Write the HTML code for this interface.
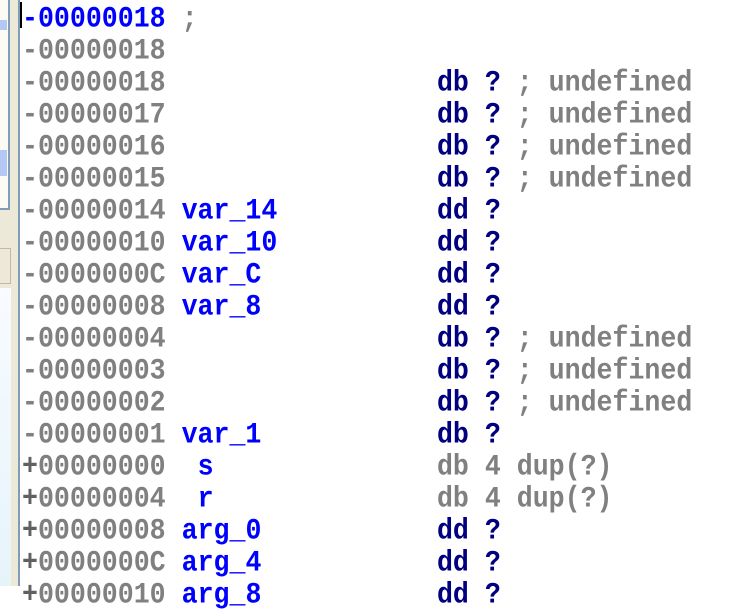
<!DOCTYPE html>
<html><head><meta charset="utf-8"><style>
html,body{margin:0;padding:0;width:754px;height:586px;overflow:hidden;background:#fff}
.l{position:absolute;left:22px;height:32px;line-height:32px;font-family:"Liberation Mono","DejaVu Sans Mono",monospace;font-weight:bold;font-size:26.6px;white-space:pre;color:#808080;transform:scaleY(1.1);transform-origin:0 50%}
.b{color:#0000ff}.n{color:#000080}.g{color:#808080}.d{color:#606060}
</style></head><body>
<div style="position:absolute;left:0;top:0;width:18px;height:586px;background:#ece9d8"></div>
<div style="position:absolute;left:0;top:0;width:8px;height:208px;background:#fbfbf4;border-right:2px solid #7f9db9;border-bottom:2px solid #7f9db9"></div>
<div style="position:absolute;left:0;top:20px;width:7px;height:10px;background:#b5c8f5"></div>
<div style="position:absolute;left:0;top:150px;width:7px;height:26px;background:#b5c8f5"></div>
<div style="position:absolute;left:0;top:248px;width:10px;height:34px;border:1px solid #bdb8a8;border-left:none"></div>
<div style="position:absolute;left:0;top:288px;width:11px;height:298px;background:linear-gradient(#f8fbff,#e6f4fa)"></div>
<div style="position:absolute;left:18px;top:0;width:2px;height:586px;background:#7f9db9"></div>
<div style="position:absolute;left:20px;top:2px;width:2px;height:26px;background:#000"></div>
<div class="l" style="top:3px"><span class="b">-00000018</span> ;</div>
<div class="l" style="top:35px">-00000018</div>
<div class="l" style="top:67px">-00000018                 <span class="n">db ?</span> ; undefined</div>
<div class="l" style="top:99px">-00000017                 <span class="n">db ?</span> ; undefined</div>
<div class="l" style="top:131px">-00000016                 <span class="n">db ?</span> ; undefined</div>
<div class="l" style="top:163px">-00000015                 <span class="n">db ?</span> ; undefined</div>
<div class="l" style="top:195px">-00000014 <span class="b">var_14</span>          <span class="n">dd ?</span></div>
<div class="l" style="top:227px">-00000010 <span class="b">var_10</span>          <span class="n">dd ?</span></div>
<div class="l" style="top:259px">-0000000C <span class="b">var_C</span>           <span class="n">dd ?</span></div>
<div class="l" style="top:291px">-00000008 <span class="b">var_8</span>           <span class="n">dd ?</span></div>
<div class="l" style="top:323px">-00000004                 <span class="n">db ?</span> ; undefined</div>
<div class="l" style="top:355px">-00000003                 <span class="n">db ?</span> ; undefined</div>
<div class="l" style="top:387px">-00000002                 <span class="n">db ?</span> ; undefined</div>
<div class="l" style="top:419px">-00000001 <span class="b">var_1</span>           <span class="n">db ?</span></div>
<div class="l" style="top:451px"><span class="d">+</span>00000000  <span class="b">s</span>              db 4 dup(?)</div>
<div class="l" style="top:483px"><span class="d">+</span>00000004  <span class="b">r</span>              db 4 dup(?)</div>
<div class="l" style="top:515px"><span class="d">+</span>00000008 <span class="b">arg_0</span>           <span class="n">dd ?</span></div>
<div class="l" style="top:547px"><span class="d">+</span>0000000C <span class="b">arg_4</span>           <span class="n">dd ?</span></div>
<div class="l" style="top:579px"><span class="d">+</span>00000010 <span class="b">arg_8</span>           <span class="n">dd ?</span></div>
</body></html>
